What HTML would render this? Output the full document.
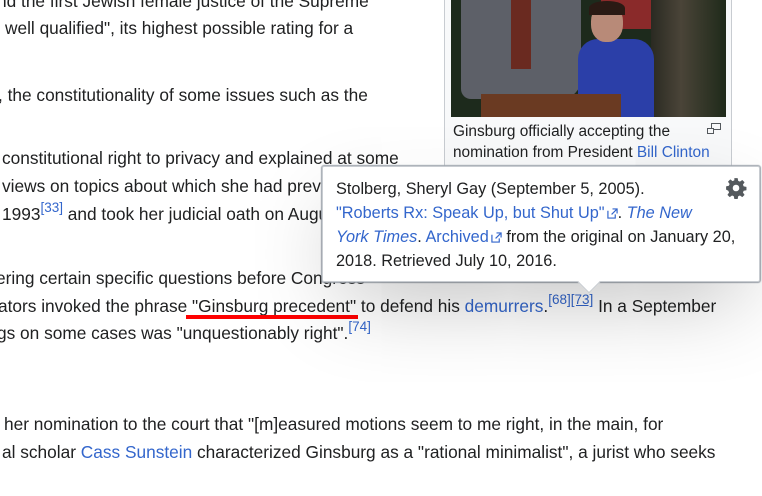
<!DOCTYPE html>
<html><head><meta charset="utf-8"><style>
*{margin:0;padding:0;box-sizing:border-box}
body{width:762px;height:496px;overflow:hidden;background:#fff;position:relative;font-family:"Liberation Sans",Arial,sans-serif;font-size:17.3px;color:#202122}
.l{position:absolute;white-space:nowrap;line-height:22px}
a{color:#3366cc;text-decoration:none}
sup{font-size:13.5px;line-height:0;position:relative;top:-1px;vertical-align:super}
.thumb{position:absolute;left:444px;top:-2px;width:288px;height:170px;background:#f8f9fa;border:1px solid #c8ccd1}
.img{position:absolute;left:6px;top:0;width:275px;height:118px;overflow:hidden;background:#1d2a1c}
.cap{position:absolute;left:8px;top:122px;font-size:15.4px;line-height:21px;color:#202122}
.pop{position:absolute;left:322px;top:166px;width:438px;height:116px;background:#fff;border:1px solid #c8ccd1;border-radius:2px;box-shadow:0 30px 90px -20px rgba(0,0,0,.3),0 0 1px 1px #a2a9b1;}
.pop .t{position:absolute;left:13px;top:10px;width:415px;font-size:16.3px;line-height:24px;color:#202122}
.arrow{position:absolute;left:258px;bottom:-9px;width:16px;height:16px;background:#fff;transform:rotate(45deg);border-right:1px solid #c8ccd1;border-bottom:1px solid #c8ccd1}
.ext{display:inline-block;width:11px;height:11px;vertical-align:-1px;margin-left:2px}
</style></head><body>
<div class="l" style="left:-3px;top:-10px">nd the first Jewish female justice of the Supreme</div>
<div class="l" style="left:5px;top:17px">well qualified", its highest possible rating for a</div>
<div class="l" style="left:-2px;top:84px">, the constitutionality of some issues such as the</div>
<div class="l" style="left:2px;top:147px">constitutional right to privacy and explained at some</div>
<div class="l" style="left:2px;top:175px">views on topics about which she had previously written</div>
<div class="l" style="left:2px;top:203px">1993<sup><a>[33]</a></sup> and took her judicial oath on August 10</div>
<div class="l" style="left:-4px;top:267px">ering certain specific questions before Congress</div>
<div class="l" style="left:-2px;top:295px">ators invoked the phrase "Ginsburg precedent" to defend his <a>demurrers</a>.<sup><a>[68]</a><a style="text-decoration:underline">[73]</a></sup> In a September</div>
<div style="position:absolute;left:186px;top:315px;width:172px;height:4px;background:#f00"></div>
<div class="l" style="left:-3px;top:322px">gs on some cases was "unquestionably right".<sup><a>[74]</a></sup></div>
<div class="l" style="left:4px;top:413px">her nomination to the court that "[m]easured motions seem to me right, in the main, for</div>
<div class="l" style="left:2px;top:441px">al scholar <a>Cass Sunstein</a> characterized Ginsburg as a "rational minimalist", a jurist who seeks</div>

<div class="thumb">
 <div class="img">
  <div style="position:absolute;left:150px;top:0;width:60px;height:30px;background:#8a2a2a"></div>
  <div style="position:absolute;left:200px;top:0;width:75px;height:118px;background:linear-gradient(90deg,#2a2a22,#4a4438 40%,#1f2a1a)"></div>
  <div style="position:absolute;left:10px;top:0;width:120px;height:100px;background:#5d6068;border-radius:0 0 20px 10px"></div>
  <div style="position:absolute;left:60px;top:0;width:20px;height:70px;background:#6a2a20"></div>
  <div style="position:absolute;left:127px;top:40px;width:76px;height:78px;background:#2b3fa8;border-radius:20px 20px 0 0"></div>
  <div style="position:absolute;left:140px;top:5px;width:32px;height:38px;background:#b88a78;border-radius:45%"></div>
  <div style="position:absolute;left:138px;top:2px;width:36px;height:14px;background:#2a1a14;border-radius:50% 50% 0 0"></div>
  <div style="position:absolute;left:30px;top:95px;width:140px;height:23px;background:#6a3a22"></div>
 </div>
 <div class="cap">Ginsburg officially accepting the<br>nomination from President <a>Bill Clinton</a></div>
 <svg style="position:absolute;left:262px;top:124px" width="14" height="12" viewBox="0 0 14 12"><rect x="4.5" y="0.5" width="9" height="6" fill="none" stroke="#54595d"/><rect x="0.5" y="5.5" width="6" height="5" fill="#f8f9fa" stroke="#54595d"/></svg>
</div>

<div class="pop">
 <div class="t">Stolberg, Sheryl Gay (September 5, 2005).<br><a>"Roberts Rx: Speak Up, but Shut Up"<svg class="ext" viewBox="0 0 12 12"><path d="M1 3v8h8V7M6 1h5v5M11 1L5 7" fill="none" stroke="#3366cc" stroke-width="1.3"/></svg></a>. <a><i>The New<br>York Times</i></a>. <a>Archived<svg class="ext" viewBox="0 0 12 12"><path d="M1 3v8h8V7M6 1h5v5M11 1L5 7" fill="none" stroke="#3366cc" stroke-width="1.3"/></svg></a> from the original on January 20,<br>2018. Retrieved July 10, 2016.</div>
 <svg style="position:absolute;left:402px;top:10px" width="22" height="22" viewBox="0 0 20 20"><path fill="#54595d" d="M8.5 1h3l.5 2.5 1.6.7 2.1-1.5 2.1 2.1-1.5 2.1.7 1.6 2.5.5v3l-2.5.5-.7 1.6 1.5 2.1-2.1 2.1-2.1-1.5-1.6.7-.5 2.5h-3l-.5-2.5-1.6-.7-2.1 1.5-2.1-2.1 1.5-2.1-.7-1.6L1 11.5v-3l2.5-.5.7-1.6-1.5-2.1 2.1-2.1 2.1 1.5 1.6-.7zM10 7a3 3 0 100 6 3 3 0 000-6z" fill-rule="evenodd"/></svg>
 <div class="arrow"></div>
</div>
</body></html>
